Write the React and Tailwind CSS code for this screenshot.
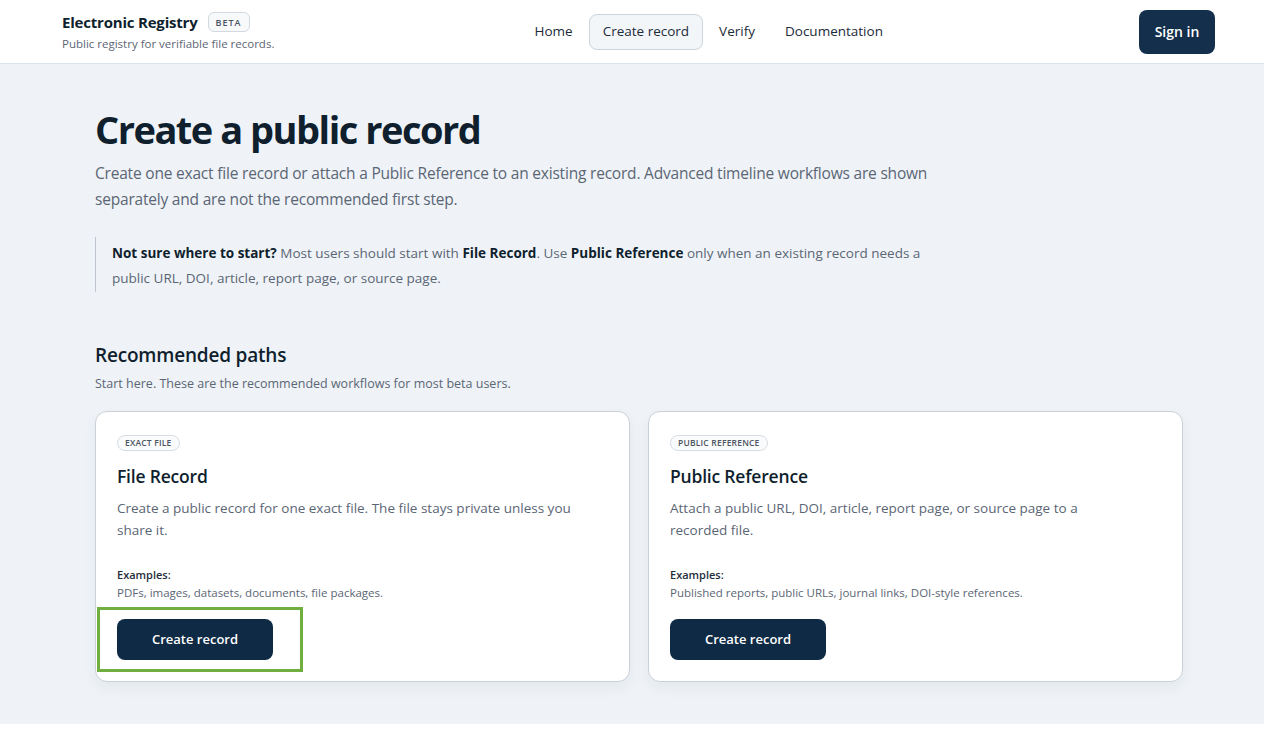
import React from 'react';

const font = { fontFamily: '"Open Sans", "Noto Sans", sans-serif' };

const navItems = ['Home', 'Create record', 'Verify', 'Documentation'];

function Header() {
  return (
    <header className="h-16 bg-white border-b border-[#dde3ea] flex items-center justify-between pl-[62px] pr-[49px]">
      <div className="flex flex-col">
        <div className="flex items-center gap-[10px]">
          <span className="text-[15px] font-bold text-[#0f1f2e] tracking-[-0.2px]">Electronic Registry</span>
          <span className="h-[20px] px-[7px] flex items-center rounded-md border border-[#d3d9e0] bg-[#f7f9fb] text-[9px] font-semibold tracking-[1px] text-[#4b5563]">BETA</span>
        </div>
        <span className="text-[11.5px] text-[#5b6675] mt-[1px]">Public registry for verifiable file records.</span>
      </div>
      <nav className="flex items-center gap-[2px] ml-[4px]">
        {navItems.map(item => (
          <a
            key={item}
            className={
              item === 'Create record'
                ? 'h-[36px] px-[13px] flex items-center rounded-lg border border-[#ccd4dd] bg-[#f3f6f9] text-[13.5px] font-medium text-[#1c2b3a]'
                : 'h-[36px] px-[14px] flex items-center text-[13.5px] font-medium text-[#1c2b3a]'
            }
          >
            {item}
          </a>
        ))}
      </nav>
      <button className="h-[44px] w-[76px] rounded-lg bg-[#132f4c] text-white text-[14px] font-semibold">Sign in</button>
    </header>
  );
}

function PathCard({ tag, title, desc, examples, highlighted }) {
  return (
    <div className="bg-white rounded-xl border border-[#c9d0d8] shadow-[0_6px_14px_rgba(15,31,46,0.05)] pt-[23px] px-[21px] pb-[21px] flex flex-col">
      <span className="self-start h-[16px] px-[7px] flex items-center rounded-full border border-[#d8dde3] bg-[#fafbfc] text-[8.5px] font-semibold tracking-[0.2px] text-[#4b5563]">{tag}</span>
      <h3 className="mt-[12px] text-[17.5px] leading-[26px] font-semibold text-[#0f1f2e] tracking-[-0.2px]">{title}</h3>
      <p className="mt-[8px] max-w-[460px] text-[13.5px] leading-[22px] text-[#5b6675]">{desc}</p>
      <div className="mt-[26px] text-[11px] leading-[16px] font-semibold text-[#1f2d3b]">Examples:</div>
      <div className="mt-[1px] text-[11.5px] leading-[18px] text-[#5b6675]">{examples}</div>
      <div className="mt-[17px] relative self-start">
        <button className="h-[41px] w-[156px] rounded-lg bg-[#0f2a44] text-white text-[13px] font-semibold">Create record</button>
        {highlighted && (
          <div className="absolute -left-[20px] -top-[12px] w-[206px] h-[65px] border-[3px] border-[#6fae3f] pointer-events-none" />
        )}
      </div>
    </div>
  );
}

export default function App() {
  return (
    <div className="min-h-screen bg-white" style={font}>
      <Header />
      <main className="bg-[#eff3f7] pl-[95px] pr-[81px] pt-[41px] pb-[42px]">
        <h1 className="text-[38px] leading-[48px] font-bold text-[#0f1f2e] tracking-[-1.5px]">Create a public record</h1>
        <p className="mt-[7px] max-w-[840px] text-[15.5px] leading-[26px] text-[#5b6675] tracking-[-0.2px]">
          Create one exact file record or attach a Public Reference to an existing record. Advanced timeline workflows are shown separately and are not the recommended first step.
        </p>
        <div className="mt-[25px] max-w-[840px] border-l border-[#bfc6cf] pl-[16px] pt-[4px] pb-[1px] text-[13.5px] leading-[25px] text-[#5b6675]">
          <p>
            <b className="font-bold text-[#0f1f2e]">Not sure where to start?</b> Most users should start with <b className="font-bold text-[#0f1f2e]">File Record</b>. Use <b className="font-bold text-[#0f1f2e]">Public Reference</b> only when an existing record needs a public URL, DOI, article, report page, or source page.
          </p>
        </div>

        <h2 className="mt-[49px] text-[19px] leading-[28px] font-semibold text-[#0f1f2e] tracking-[-0.2px]">Recommended paths</h2>
        <p className="mt-[5px] text-[12.5px] leading-[20px] text-[#5b6675]">Start here. These are the recommended workflows for most beta users.</p>

        <div className="mt-[17px] grid grid-cols-2 gap-[18px] w-[1088px]">
          <PathCard
            tag="EXACT FILE"
            title="File Record"
            desc="Create a public record for one exact file. The file stays private unless you share it."
            examples="PDFs, images, datasets, documents, file packages."
            highlighted
          />
          <PathCard
            tag="PUBLIC REFERENCE"
            title="Public Reference"
            desc="Attach a public URL, DOI, article, report page, or source page to a recorded file."
            examples="Published reports, public URLs, journal links, DOI-style references."
          />
        </div>
      </main>
    </div>
  );
}
